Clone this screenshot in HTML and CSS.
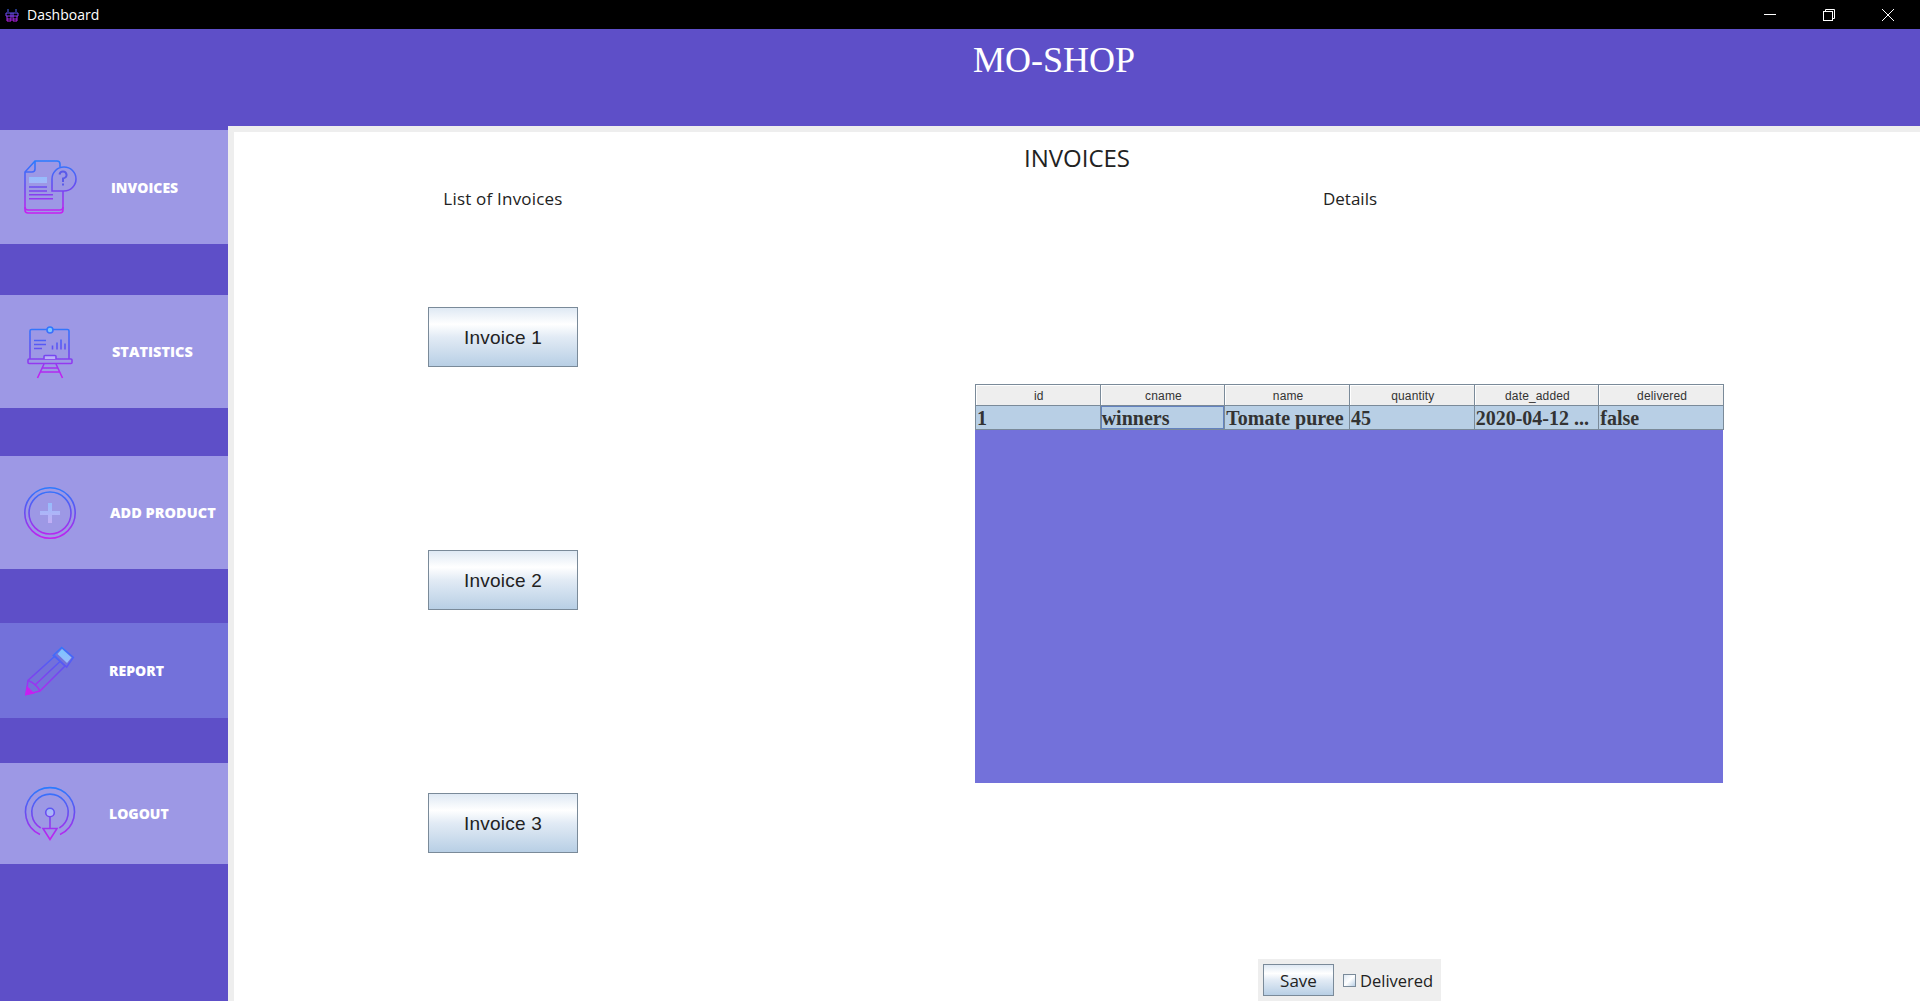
FILE: index.html
```html
<!DOCTYPE html>
<html lang="en">
<head>
<meta charset="utf-8">
<title>Dashboard</title>
<link rel="stylesheet" href="styles.css">
</head>
<body>
<div class="window">
  <div class="titlebar">
    <div class="titlebar-left">
      <svg class="app-icon" viewBox="0 0 14 14" fill="none">
        <defs><linearGradient id="tb" x1="0" y1="0" x2="0" y2="1"><stop offset="0" stop-color="#3a6cff"/><stop offset="1" stop-color="#c01ff0"/></linearGradient></defs>
        <path d="M3 1v3M11 1v3M1 5h12v3H1zM2 8v5h4V8M8 8v5h4V8M2 11h4M8 11h4M6 5v3M8 5v3" stroke="url(#tb)" stroke-width="1"/>
      </svg>
      <span>Dashboard</span>
    </div>
    <div class="controls">
      <div class="control"><svg width="14" height="14" viewBox="0 0 14 14"><path d="M1 6.500h12" stroke="#fff" fill="none"/></svg></div>
      <div class="control"><svg width="14" height="14" viewBox="0 0 14 14" fill="none" stroke="#fff"><path d="M3.500 3V1.500h9v9H11"/><rect x="1.500" y="3.500" width="9" height="9"/></svg></div>
      <div class="control"><svg width="14" height="14" viewBox="0 0 14 14"><path d="M1 1l12 12M13 1L1 13" stroke="#fff" fill="none"/></svg></div>
    </div>
  </div>
  <header class="header"><h1 class="brand">MO-SHOP</h1></header>
  <div class="body">
    <nav class="sidebar">
      <a class="nav-item item-invoices">
        <svg class="nav-icon" viewBox="0 0 60 60" fill="none" stroke="url(#ig)" stroke-width="1.600">
          <defs>
            <linearGradient id="ig" gradientUnits="userSpaceOnUse" x1="0" y1="4" x2="0" y2="56"><stop offset="0" stop-color="#2a7bff"/><stop offset=".5" stop-color="#6a4cf0"/><stop offset="1" stop-color="#c81ff0"/></linearGradient>
            <linearGradient id="il" gradientUnits="userSpaceOnUse" x1="0" y1="10" x2="0" y2="50"><stop offset="0" stop-color="#7fc4ff"/><stop offset="1" stop-color="#d9a6f2"/></linearGradient>
          </defs>
          <path d="M40 10V7q0-3-3-3H15L5 15V53q0 3 3 3H40q3 0 3-3V34"/>
          <path d="M15 4V12q0 3-3 3H5"/>
          <path d="M5 50q0 3 3 3H40q3 0 3-3"/>
          <path d="M32 34V22a12 12 0 1 1 12 12z"/>
          <rect x="9" y="20" width="18" height="6" fill="url(#il)" stroke="none"/>
          <path d="M9 30h18M9 34h18M9 37.700h24M9 41.700h24"/>
          <path d="M39.500 17.500q.5-3 3.500-3t3.500 3-3.500 4v3.500M43 26.500v2" stroke="#5a5ae8" stroke-width="2"/>
        </svg>
        <span class="nav-label">INVOICES</span>
      </a>
      <a class="nav-item item-statistics">
        <svg class="nav-icon" viewBox="0 0 60 60" fill="none" stroke="url(#ig)" stroke-width="1.600">
          <path d="M10 37V9q0-1.500 1.500-1.500H27M33 7.500H47.500q1.500 0 1.500 1.500V37"/>
          <circle cx="30" cy="8" r="3" fill="url(#il)"/>
          <rect x="8" y="37" width="44" height="4.500" rx="1"/>
          <path d="M24 37v-2.500q0-1 1-1h10q1 0 1 1V37" fill="url(#il)"/>
          <path d="M24 42l-6.500 14M36 42l6.500 14M21.500 46h17M20 50h20"/>
          <path d="M14 18.500h12M14 22.500h12M14 26.500h8M32.500 27.500v-4M37 27.500v-7M41 27.500v-10M45 27.500v-6"/>
        </svg>
        <span class="nav-label">STATISTICS</span>
      </a>
      <a class="nav-item item-add">
        <svg class="nav-icon" viewBox="0 0 60 60" fill="none" stroke="url(#ig)" stroke-width="1.600">
          <circle cx="30" cy="30" r="25.200"/>
          <circle cx="30" cy="30" r="21"/>
          <path d="M20 30h20M30 20v20" stroke="url(#il)" stroke-width="4"/>
        </svg>
        <span class="nav-label">ADD PRODUCT</span>
      </a>
      <a class="nav-item item-report">
        <svg class="nav-icon" viewBox="0 0 60 60" fill="none" stroke="url(#ig)" stroke-width="1.600">
          <path d="M20 50L45 25L35 15L8 39.500L6 53.500z"/>
          <path d="M41.700 6.500L53.300 16.500L46.700 26L33.300 14.500z" fill="none"/>
          <path d="M42 8L51.500 16.500L47 22L37.500 13z" fill="url(#il)" stroke="none"/>
          <path d="M14.500 44.500L40.500 20M8 39.500q8 3 12 10.500"/>
          <path d="M6 53.500l1.500-7 5.500 5.500z" fill="#c81ff0" stroke="#c81ff0"/>
        </svg>
        <span class="nav-label">REPORT</span>
      </a>
      <a class="nav-item item-logout">
        <svg class="nav-icon" viewBox="0 0 60 60" fill="none" stroke="url(#ig)" stroke-width="1.600">
          <path d="M20 50.500A24.500 24.500 0 1 1 40 50.500"/>
          <path d="M20.700 44A18.200 18.200 0 1 1 39.300 44"/>
          <circle cx="30" cy="28.500" r="4.300" fill="url(#il)"/>
          <path d="M30 33v11M23 44.500h14l-7 11z"/>
        </svg>
        <span class="nav-label">LOGOUT</span>
      </a>
    </nav>
    <main class="main">
      <h2 class="page-title">INVOICES</h2>
      <div class="columns">
        <section class="list-col">
          <h3 class="col-title">List of Invoices</h3>
          <div class="invoice-list">
            <button class="btn invoice-btn">Invoice 1</button>
            <button class="btn invoice-btn">Invoice 2</button>
            <button class="btn invoice-btn">Invoice 3</button>
          </div>
        </section>
        <section class="detail-col">
          <h3 class="col-title col-title-tight">Details</h3>
          <div class="table-wrap">
            <table class="grid">
              <thead>
                <tr><th>id</th><th>cname</th><th>name</th><th>quantity</th><th>date_added</th><th>delivered</th></tr>
              </thead>
              <tbody>
                <tr><td>1</td><td class="focus">winners</td><td>Tomate puree</td><td>45</td><td>2020-04-12 ...</td><td>false</td></tr>
              </tbody>
            </table>
          </div>
          <div class="actions">
            <button class="btn save-btn">Save</button>
            <label class="check"><span class="box"></span>Delivered</label>
          </div>
        </section>
      </div>
    </main>
  </div>
</div>
</body>
</html>
```

FILE: styles.css
```css
* { box-sizing: border-box; }
html, body { margin: 0; height: 100%; overflow: hidden; }
body { font-family: "Open Sans", "Liberation Sans", sans-serif; background: #5e4fc8; }
.window { display: flex; flex-direction: column; height: 1001px; }

.titlebar { flex: 0 0 29px; background: #000; color: #fff; display: flex; justify-content: space-between; align-items: center; }
.titlebar-left { display: flex; align-items: center; padding-left: 5px; font-size: 14px; gap: 8px; }
.app-icon { width: 14px; height: 14px; }
.controls { display: flex; padding-right: 3px; }
.control { width: 59px; height: 29px; display: flex; align-items: center; justify-content: center; }

.header { flex: 0 0 97px; background: #5e4fc8; padding: 10px 0 0 188px; text-align: center; }
.brand { margin: 0; color: #fff; font: 400 36px/42px "Liberation Serif", serif; }

.body { flex: 1; display: flex; min-height: 0; }
.sidebar { flex: 0 0 228px; padding-top: 4px; display: flex; flex-direction: column; }
.nav-item { display: flex; align-items: center; padding-left: 20px; background: #9d98e5; color: #fff; }
.nav-icon { width: 60px; height: 60px; flex: none; }
.nav-label { font-weight: 800; font-size: 14.500px; margin-left: 30px; white-space: nowrap; }
.item-invoices { height: 114px; margin-bottom: 51px; }
.item-invoices .nav-label { margin-left: 31px; font-size: 14px; }
.item-statistics { height: 113px; margin-bottom: 48px; }
.item-statistics .nav-label { margin-left: 32px; }
.item-add { height: 113px; margin-bottom: 54px; }
.item-report { height: 95px; margin-bottom: 45px; background: #7371da; }
.item-report .nav-label { margin-left: 29px; font-size: 14px; }
.item-logout { height: 101px; }
.item-logout .nav-label { margin-left: 29px; font-size: 14px; }

.main { flex: 1; background: #fff; border-left: 6px solid #eee; border-top: 6px solid #eee; color: #222; padding-top: 12px; min-width: 0; }
.page-title { margin: 0; height: 28px; font-weight: 400; font-size: 24px; line-height: 28px; text-align: center; }
.columns { display: grid; grid-template-columns: 538px 1fr; column-gap: 8px; margin-top: 16px; }
.col-title { margin: 0; height: 22px; font-weight: 400; font-size: 17px; letter-spacing: .2px; line-height: 22px; text-align: center; }
.col-title-tight { letter-spacing: 0; }
.list-col, .detail-col { display: flex; flex-direction: column; align-items: center; }

.btn { font-family: "Liberation Sans", sans-serif; color: #222; border: 1px solid #7a8a99; padding: 0; background: linear-gradient(#dfe9f4 0%, #fff 28%, #e2ebf5 50%, #b8cfe5 100%); }
.invoice-list { display: flex; flex-direction: column; gap: 183px; margin-top: 97px; }
.invoice-btn { width: 150px; height: 60px; font-size: 19px; letter-spacing: .2px; padding-top: 1px; }

.table-wrap { margin-top: 174px; margin-left: -2px; width: 748px; height: 399px; background: #7371da; }
.grid { width: 749px; table-layout: fixed; border-collapse: collapse; }
.grid th { height: 21px; padding: 1px 0 0 2px; background: #eee; border: 1px solid #7a8a99; font: 400 12px/14px "Liberation Sans", sans-serif; letter-spacing: .15px; color: #333; box-shadow: inset 1px 1px 0 #fff; }
.grid td { height: 24px; padding: 1px 1px 0; background: #b8cfe5; border: 1px solid #7a8a99; font: 700 20px/20px "Liberation Serif", serif; color: #333; white-space: nowrap; overflow: hidden; }
.grid td.focus { box-shadow: inset 0 0 0 1px #6382bf; }

.actions { margin-top: 176px; margin-left: -1px; width: 183px; height: 42px; padding: 5px; background: #eee; display: flex; align-items: flex-start; gap: 9px; }
.save-btn { width: 71px; height: 32px; font-family: "Open Sans", sans-serif; font-size: 17px; }
.check { display: flex; align-items: center; height: 32px; font-size: 16.500px; gap: 4px; color: #222; }
.box { width: 13px; height: 13px; border: 1px solid #7a8a99; background: linear-gradient(135deg, #dfe9f4, #fff 50%, #b8cfe5); }
```
